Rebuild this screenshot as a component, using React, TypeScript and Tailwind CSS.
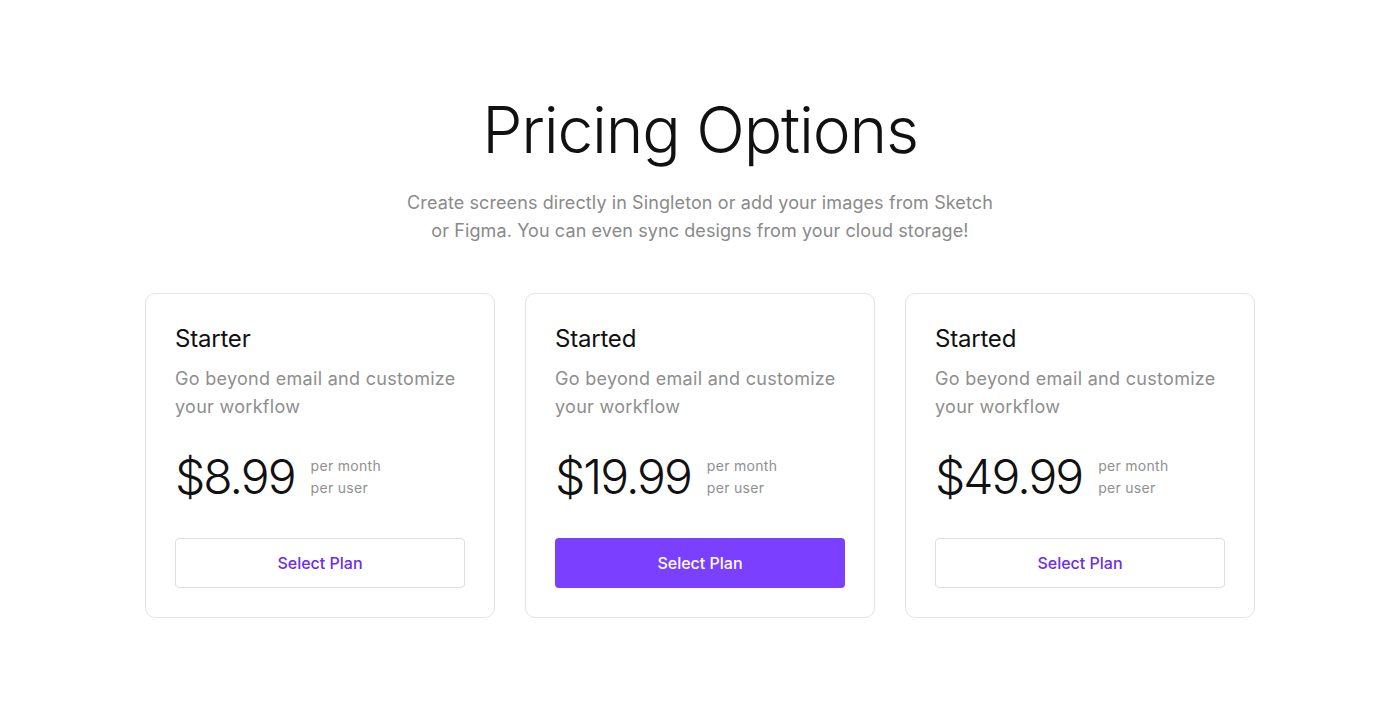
const plans = [
  { name: 'Starter', price: '$8.99', featured: false },
  { name: 'Started', price: '$19.99', featured: true },
  { name: 'Started', price: '$49.99', featured: false },
];

export default function App() {
  return (
    <div className="min-h-[720px] bg-white flex flex-col items-center pt-[90px] font-['Inter',sans-serif]">
      <h1 className="text-[64px] leading-[80px] font-light tracking-[-1.2px] text-[#111111]">Pricing Options</h1>
      <p className="mt-[19px] text-center text-[18px] leading-[28px] tracking-[0.1px] text-[#8a8a8a]">
        Create screens directly in Singleton or add your images from Sketch
        <br />
        or Figma. You can even sync designs from your cloud storage!
      </p>

      <div className="mt-12 flex gap-[30px]">
        {plans.map((plan, i) => (
          <div
            key={i}
            className="w-[350px] rounded-[10px] border border-[#e4e4ea] bg-white px-[29px] pt-[29px] pb-[29px]"
          >
            <h2 className="text-[24px] leading-[32px] tracking-[-0.2px] text-[#111111]">{plan.name}</h2>
            <p className="mt-[10px] text-[18px] leading-[28px] tracking-[0.3px] text-[#8e8e8e]">
              Go beyond email and customize your workflow
            </p>
            <div className="mt-7 flex items-center gap-4">
              <span className="text-[48px] leading-[56px] font-light tracking-[-2px] text-[#111111]">{plan.price}</span>
              <div className="text-[14px] leading-[22px] tracking-[0.3px] text-[#909090]">
                <div>per month</div>
                <div>per user</div>
              </div>
            </div>
            {plan.featured ? (
              <button className="mt-[33px] h-[50px] w-full rounded-[4px] bg-[#7b3fff] text-[16px] font-medium text-white">
                Select Plan
              </button>
            ) : (
              <button className="mt-[33px] h-[50px] w-full rounded-[4px] border border-[#dddde5] bg-white text-[16px] font-medium text-[#6a2cf0]">
                Select Plan
              </button>
            )}
          </div>
        ))}
      </div>
    </div>
  );
}
